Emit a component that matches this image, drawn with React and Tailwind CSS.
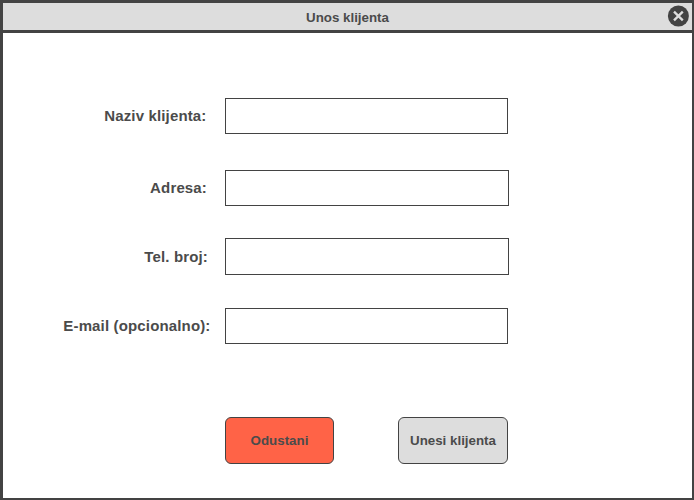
const fields = [
  { id: "naziv", label: "Naziv klijenta:", row: "h-9", labelPad: "pr-[18.5px] pb-0.5", input: "w-[283px]" },
  { id: "adresa", label: "Adresa:", row: "h-9 mt-9", labelPad: "pr-[18px] pb-0.5", input: "w-[284px]" },
  { id: "telefon", label: "Tel. broj:", row: "h-[37px] mt-8", labelPad: "pr-[17px]", input: "w-[284px]" },
  { id: "email", label: "E-mail (opcionalno):", row: "h-9 mt-[33px]", labelPad: "pr-[14.5px] pb-0.5", input: "w-[283px]" },
];

function CloseIcon() {
  return (
    <svg width="22" height="22" viewBox="0 0 22 22" className="block">
      <circle cx="11.4" cy="11" r="10.5" fill="#434343" />
      <path d="M7 6.6 15.8 15.4M15.8 6.6 7 15.4" stroke="#dddddd" strokeWidth="2.3" />
    </svg>
  );
}

export default function App() {
  return (
    <div className="flex h-[500px] w-[694px] flex-col border-t-3 border-r-2 border-b-2 border-l-3 border-[#434343] bg-white font-['Liberation_Sans',Arial,sans-serif] font-bold text-[#4b4b4b]">
      <header className="grid h-[30px] grid-cols-[1fr_auto_1fr] items-center border-b-3 border-[#434343] bg-[#dddddd]">
        <h1 className="col-start-2 pt-[3px] text-[13.33px] leading-4">Unos klijenta</h1>
        <button aria-label="Zatvori" className="mr-[3px] justify-self-end pb-[2px]">
          <CloseIcon />
        </button>
      </header>
      <form className="pt-[65px]">
        {fields.map((f) => (
          <div key={f.id} className={`flex items-stretch ${f.row}`}>
            <label
              htmlFor={f.id}
              className={`flex w-[222px] items-center justify-end text-[15px] leading-none tracking-[0.15px] whitespace-nowrap ${f.labelPad}`}
            >
              {f.label}
            </label>
            <input id={f.id} className={`border border-[#434343] bg-white px-2 outline-none ${f.input}`} />
          </div>
        ))}
        <div className="mt-[73px] ml-[222px] flex h-[47px] gap-16 text-[13.33px]">
          <button type="button" className="w-[109px] rounded-md border border-[#434343] bg-[#ff6347]">
            Odustani
          </button>
          <button type="button" className="w-[110px] rounded-md border border-[#434343] bg-[#dddddd]">
            Unesi klijenta
          </button>
        </div>
      </form>
    </div>
  );
}
